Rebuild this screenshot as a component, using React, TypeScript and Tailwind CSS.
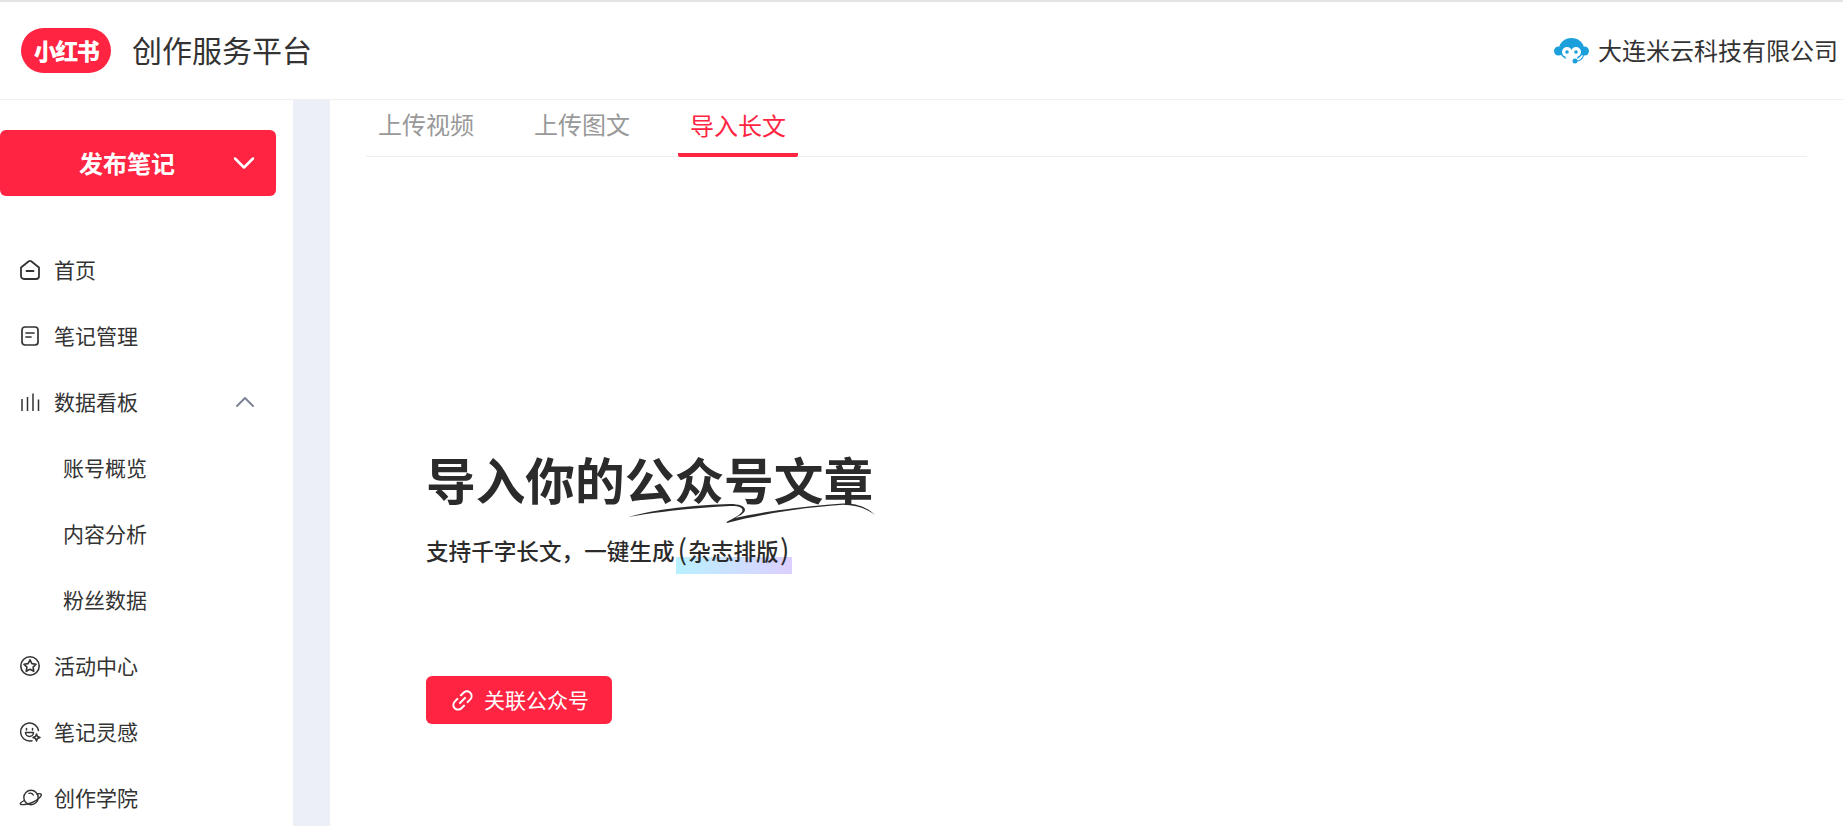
import { ChevronDown, ChevronUp } from "lucide-react";
import { AiOutlineLink } from "react-icons/ai";

const font = '"Noto Sans CJK SC", "Noto Sans", sans-serif';

function HomeIcon() {
  return (
    <svg width="22" height="22" viewBox="0 0 22 22" fill="none" stroke="#333" strokeWidth="1.8" strokeLinejoin="round" strokeLinecap="round">
      <path d="M2 8.500 9.800 2.300a2 2 0 0 1 2.400 0L20 8.500V17a3 3 0 0 1-3 3H5a3 3 0 0 1-3-3V8.500Z" />
      <path d="M7.500 12h7" />
    </svg>
  );
}

function NoteIcon() {
  return (
    <svg width="22" height="22" viewBox="0 0 22 22" fill="none" stroke="#333" strokeWidth="1.7" strokeLinecap="round">
      <rect x="3" y="2" width="16" height="18" rx="3" />
      <path d="M7 8h8M7 12h5" />
    </svg>
  );
}

function BarsIcon() {
  return (
    <svg width="22" height="22" viewBox="0 0 22 22" fill="none" stroke="#333" strokeWidth="1.5">
      <path d="M3 8v12M8.500 6v14M14 2.500V20M19.500 8.500V20" />
    </svg>
  );
}

function StarIcon() {
  return (
    <svg width="22" height="22" viewBox="0 0 22 22" fill="none" stroke="#333" strokeWidth="1.6" strokeLinejoin="round">
      <circle cx="11" cy="11" r="9.200" />
      <path d="m11 4.800 1.900 3.800 4.200.6-3 2.900.7 4.200-3.800-2-3.800 2 .7-4.200-3-2.900 4.200-.6L11 4.800Z" />
    </svg>
  );
}

function IdeaIcon() {
  return (
    <svg width="22" height="22" viewBox="0 0 22 22" fill="none" stroke="#333" strokeWidth="1.500" strokeLinecap="round" strokeLinejoin="round">
      <path d="M19.500 9.500A9 9 0 1 0 11 20c.8 0 1.400-.1 2-.2" />
      <path d="M7.500 7.500v1.500M13.500 7.500v1.500M6.500 11.500h8a4 4 0 0 1-8 0Z" />
      <path d="m17.500 13 1 2.500 2.500 1-2.500 1-1 2.500-1-2.500-2.500-1 2.500-1 1-2.500Z" />
    </svg>
  );
}

function PlanetIcon() {
  return (
    <svg width="24" height="22" viewBox="0 0 24 22" fill="none" stroke="#333" strokeWidth="1.400" strokeLinecap="round">
      <circle cx="12" cy="10.500" r="7.200" />
      <path d="M5.200 13.500C2.500 15 .8 16.300 1.300 17c1 1.300 7 .5 12-1.500s9.500-6.500 9-8c-.3-.8-2-1-4.300-.5" />
      <path d="M10 6.300c1.800-.5 3.500.2 4.300 1.700" />
    </svg>
  );
}

function MonkeyIcon() {
  return (
    <svg width="35" height="26" viewBox="0 0 35 26">
      <ellipse cx="4.500" cy="13" rx="4.500" ry="4.500" fill="#1ba0dc" />
      <ellipse cx="30.500" cy="13" rx="4.500" ry="4.500" fill="#1ba0dc" />
      <ellipse cx="17.500" cy="11" rx="12.500" ry="11" fill="#1ba0dc" />
      <ellipse cx="13" cy="14" rx="5" ry="5" fill="#fff" />
      <ellipse cx="22" cy="14" rx="5" ry="5" fill="#fff" />
      <ellipse cx="17.500" cy="19" rx="6" ry="4.500" fill="#fff" />
      <circle cx="13" cy="14" r="1.800" fill="#1ba0dc" />
      <circle cx="22" cy="14" r="1.800" fill="#1ba0dc" />
      <circle cx="21" cy="23" r="2.500" fill="#1ba0dc" />
      <path d="M22 23c3.500 0 7-2 7.500-6" fill="none" stroke="#1ba0dc" strokeWidth="1.200" />
    </svg>
  );
}

function Squiggle() {
  return (
    <svg width="250" height="22" viewBox="0 0 250 22" className="absolute left-[201px] top-[61px]">
      <path
        d="M1 14C30 6 65 2 103 1c9 0 15 2 15 6 0 3-6 6-10 8 22-5 67-12 108-14.500C232 0 242 6 248 12c-8-6-18-10-32-10.200C175 4.500 135 11 100 20l-.5-1c5.500-3 16.500-8 16-12-.5-3.500-5.500-4-12.500-4C65 5 30 9 1 14Z"
        fill="#2b2b2b"
      />
    </svg>
  );
}

const navItems = [
  { label: "首页", icon: <HomeIcon /> },
  { label: "笔记管理", icon: <NoteIcon /> },
  { label: "数据看板", icon: <BarsIcon />, open: true },
  { label: "账号概览", sub: true },
  { label: "内容分析", sub: true },
  { label: "粉丝数据", sub: true },
  { label: "活动中心", icon: <StarIcon /> },
  { label: "笔记灵感", icon: <IdeaIcon /> },
  { label: "创作学院", icon: <PlanetIcon /> },
];

export default function App() {
  return (
    <div className="h-[826px] w-full overflow-hidden bg-white flex flex-col" style={{ fontFamily: font }}>
      <header className="h-[100px] shrink-0 border-t-2 border-b border-t-[#e4e4e4] border-b-[#f0f0f0] flex items-center justify-between pl-[21px] pr-[5px]">
        <div className="flex items-center gap-[21px]">
          <div className="w-[90px] h-[45px] rounded-full bg-[#ff2442] text-white text-[23px] font-black leading-none flex items-center justify-center tracking-[-1.500px]">
            小红书
          </div>
          <span className="text-[30px] leading-none text-[#333] pb-[3px]">创作服务平台</span>
        </div>
        <div className="flex items-center gap-[9px]">
          <MonkeyIcon />
          <span className="text-[24px] leading-none text-[#333] pb-[2px]">大连米云科技有限公司</span>
        </div>
      </header>

      <div className="flex flex-1 min-h-0">
        <aside className="w-[293px] shrink-0 pt-[30px]">
          <div className="pr-[17px]">
            <button className="w-full h-[66px] rounded-[6px] bg-[#ff2442] text-white text-[24px] font-bold flex items-center pl-[79px] pr-[14px] justify-between">
              <span>发布笔记</span>
              <ChevronDown size={36} strokeWidth={1.700} />
            </button>
          </div>
          <nav className="mt-[41px]">
            {navItems.map((item) => (
              <div key={item.label} className="h-[66px] flex items-center text-[21px] text-[#333]">
                {item.sub ? (
                  <span className="pl-[63px]">{item.label}</span>
                ) : (
                  <>
                    <span className="w-[54px] pl-[19px] flex shrink-0">{item.icon}</span>
                    <span>{item.label}</span>
                    {item.open && <ChevronUp size={32} strokeWidth={1.500} className="ml-auto mr-[32px] text-[#7d8494]" />}
                  </>
                )}
              </div>
            ))}
          </nav>
        </aside>

        <div className="w-[37px] shrink-0 bg-[#eceff6]" />

        <main className="flex-1 min-w-0 pl-[36px] pr-[36px]">
          <div className="h-[57px] flex gap-[36px] border-b border-[#eeeeee]">
            <div className="w-[120px] flex items-center justify-center text-[24px] text-[#999] pb-[8px]">上传视频</div>
            <div className="w-[120px] flex items-center justify-center text-[24px] text-[#999] pb-[8px]">上传图文</div>
            <div className="w-[120px] flex items-center justify-center text-[24px] text-[#ff2442] border-b-4 border-[#ff2442] rounded-b-[2px] -mb-px pb-[4px]">导入长文</div>
          </div>

          <div className="pl-[60px] pt-[285px]">
            <div className="relative">
              <h1 className="text-[49.700px] leading-[72px] font-bold text-[#2b2b2b]">导入你的公众号文章</h1>
              <Squiggle />
            </div>
            <p className="mt-[18px] text-[22.600px] leading-[32px] font-medium text-[#2b2b2b]">
              支持千字长文，一键生成
              <span className="inline-flex items-baseline justify-between w-[116px] ml-[1px] px-[2px] pb-[7px] bg-gradient-to-r from-[#b8f0ff] to-[#dccfff] bg-[length:100%_17px] bg-bottom bg-no-repeat">
                <span className="text-[28px] font-normal">(</span>
                <span>杂志排版</span>
                <span className="text-[28px] font-normal">)</span>
              </span>
            </p>
            <button className="mt-[102px] w-[186px] h-[48px] rounded-[6px] bg-[#ff2442] text-white text-[21px] flex items-center justify-center gap-[8px]">
              <AiOutlineLink size={27} />
              <span>关联公众号</span>
            </button>
          </div>
        </main>
      </div>
    </div>
  );
}
